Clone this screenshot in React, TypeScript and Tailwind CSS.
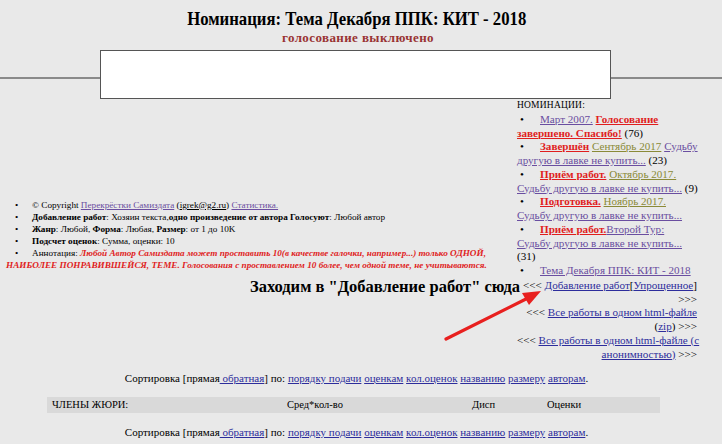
import React from "react";

const P = "text-[#6a4ea0] underline";
const R = "text-[#e01e1e] font-bold underline";
const O = "text-[#8a8a38] underline";
const B = "text-[#2d2d9c] underline";

function Bul({ w, pl }: { w: string; pl: string }) {
  return <span className={`inline-block ${w} ${pl}`}>•</span>;
}

function SortLine() {
  return (
    <div className="pr-[9px] text-center text-[11px] leading-[14px] text-black whitespace-nowrap">
      Сортировка [прямая<a className={B}> обратная</a>] по: <a className={B}>порядку подачи</a>{" "}
      <a className={B}>оценкам</a> <a className={B}>кол.оценок</a> <a className={B}>названию</a>{" "}
      <a className={B}>размеру</a> <a className={B}>авторам</a>.
    </div>
  );
}

export default function App() {
  return (
    <div
      className="relative w-[722px] h-[444px] overflow-hidden bg-[#e9e9e9] text-black"
      style={{ fontFamily: '"Liberation Serif", "Times New Roman", serif' }}
    >
      <div className="pt-[8px] pr-[9px] text-center text-[19px] leading-[22px] font-bold">
        <span className="inline-block scale-x-[0.88]">Номинация: Тема Декабря ППК: КИТ - 2018</span>
      </div>
      <div className="pr-[6px] text-center text-[13px] leading-[16px] font-bold text-[#993333] tracking-[0.4px]">
        голосование выключено
      </div>
      <div className="mt-[4px] flex items-start">
        <div className="w-[100px] mt-[27px] h-[2px] bg-[#8a8a8a]" />
        <div className="w-[511px] h-[49px] bg-white border border-[#555555]" />
        <div className="flex-1 mt-[27px] h-[2px] bg-[#8a8a8a]" />
      </div>

      <div className="grid grid-cols-[517px_192px]">
        <div className="self-end pb-[7px] pl-[6px] text-[9.2px] leading-[12px]">
          <div>
            <Bul w="w-[26px]" pl="pl-[9px]" />© Copyright <a className={P}>Перекрёстки Самиздата</a> (
            <a className="underline">igrek@g2.ru</a>) <a className={P}>Статистика.</a>
          </div>
          <div>
            <Bul w="w-[26px]" pl="pl-[9px]" />
            <b>Добавление работ</b>: Хозяин текста,<b>одно произведение от автора Голосуют</b>: Любой автор
          </div>
          <div>
            <Bul w="w-[26px]" pl="pl-[9px]" />
            <b>Жанр</b>: Любой, <b>Форма</b>: Любая, <b>Размер</b>: от 1 до 10K
          </div>
          <div>
            <Bul w="w-[26px]" pl="pl-[9px]" />
            <b>Подсчет оценок</b>: Сумма, оценки: 10
          </div>
          <div className="whitespace-nowrap">
            <Bul w="w-[26px]" pl="pl-[9px]" />
            Аннотация:{" "}
            <span className="text-[#e01e1e] font-bold italic text-[9.2px]">
              Любой Автор Самиздата может проставить 10(в качестве галочки, например...) только ОДНОЙ,
              <br />
              НАИБОЛЕЕ ПОНРАВИВШЕЙСЯ, ТЕМЕ. Голосования с проставлением 10 более, чем одной теме, не учитываются.
            </span>
          </div>
        </div>

        <div className="text-[11.1px] leading-[13.75px] whitespace-nowrap">
          <div className="text-[9.5px] tracking-[0.2px]">НОМИНАЦИИ:</div>
          <div>
            <Bul w="w-[23px]" pl="pl-[3px]" />
            <a className={P}>Март 2007.</a> <a className={R}>Голосование</a>
            <br />
            <a className={R}>завершено. Спасибо!</a> (76)
          </div>
          <div>
            <Bul w="w-[23px]" pl="pl-[3px]" />
            <a className={R}>Завершён</a> <a className={O}>Сентябрь 2017</a> <a className={P}>Судьбу</a>
            <br />
            <a className={P}>другую в лавке не купить...</a> (23)
          </div>
          <div>
            <Bul w="w-[23px]" pl="pl-[3px]" />
            <a className={R}>Приём работ.</a> <a className={O}>Октябрь 2017.</a>
            <br />
            <a className={P}>Судьбу другую в лавке не купить...</a> (9)
          </div>
          <div>
            <Bul w="w-[23px]" pl="pl-[3px]" />
            <a className={R}>Подготовка.</a> <a className={O}>Ноябрь 2017.</a>
            <br />
            <a className={P}>Судьбу другую в лавке не купить...</a>
          </div>
          <div>
            <Bul w="w-[23px]" pl="pl-[3px]" />
            <a className={R}>Приём работ.</a>
            <a className={P}>Второй Тур:</a>
            <br />
            <a className={P}>Судьбу другую в лавке не купить...</a>
            <br />
            (31)
          </div>
          <div>
            <Bul w="w-[23px]" pl="pl-[3px]" />
            <a className={P}>Тема Декабря ППК: КИТ - 2018</a>
          </div>
        </div>

        <div className="pt-[1px] -mr-[3px] text-right text-[16.5px] leading-[16px] font-bold whitespace-nowrap">
          Заходим в "Добавление работ" сюда
        </div>
        <div className="pt-[1px] pr-[12px] text-right text-[11.1px] leading-[13.75px] whitespace-nowrap">
          <div>
            &lt;&lt;&lt; <a className={B}>Добавление работ</a>[<a className={B}>Упрощенное</a>]
            <br />
            &gt;&gt;&gt;
          </div>
          <div>
            &lt;&lt;&lt; <a className={B}>Все работы в одном html-файле</a>
            <br />(<a className={B}>zip</a>) &gt;&gt;&gt;
          </div>
          <div>
            &lt;&lt;&lt; <a className={B}>Все работы в одном html-файле (с</a>
            <br />
            <a className={B}>анонимностью)</a> &gt;&gt;&gt;
          </div>
        </div>
      </div>

      <div className="mt-[10px]">
        <SortLine />
      </div>
      <div className="mt-[12px] ml-[47px] w-[613px] h-[16px] bg-[#d9d9d9] grid grid-cols-[235px_185px_75px_1fr] items-center pl-[5px] text-[10.5px] leading-[14px]">
        <div>ЧЛЕНЫ ЖЮРИ:</div>
        <div>Сред*кол-во</div>
        <div>Дисп</div>
        <div>Оценки</div>
      </div>
      <div className="mt-[12px]">
        <SortLine />
      </div>

      <svg className="absolute left-0 top-0 pointer-events-none" width="722" height="444">
        <line x1="446" y1="339" x2="528" y2="298" stroke="#e8201f" strokeWidth="3.2" strokeLinecap="round" />
        <polygon points="541,291 522,293 529,305" fill="#e8201f" />
      </svg>
    </div>
  );
}
